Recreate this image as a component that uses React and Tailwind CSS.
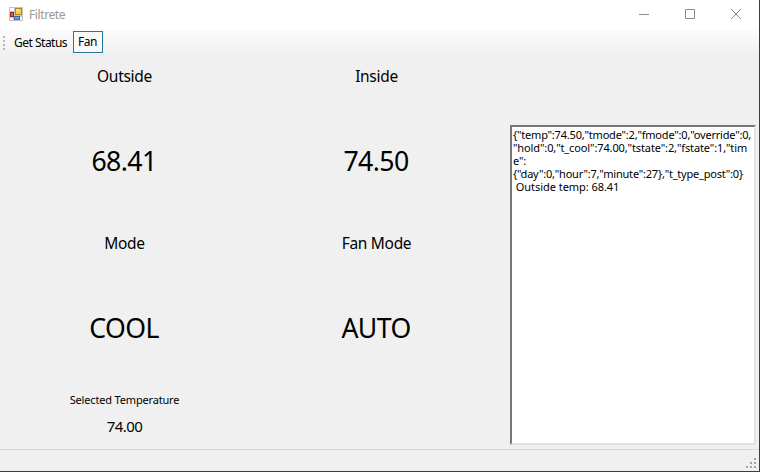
import React from "react";

function AppIcon() {
  return (
    <svg width="14" height="14" viewBox="0 0 14 14" shapeRendering="crispEdges">
      <rect width="14" height="14" fill="#c4c2c0" />
      <path d="M1 1h4v3H1zM1 11h3v2H1zM11 10h2v3h-2z" fill="#fff" />
      <rect x="6" y="1" width="7" height="7" fill="#b88a1e" />
      <rect x="7" y="2" width="5" height="5" fill="#f6cf52" />
      <rect x="7" y="2" width="3" height="2" fill="#fbe389" />
      <rect x="1" y="5" width="4" height="5" fill="#a02a20" />
      <rect x="2" y="6" width="2" height="3" fill="#dc6248" />
      <rect x="5" y="9" width="6" height="4" fill="#3c6cc0" />
      <rect x="6" y="10" width="4" height="2" fill="#6c9ce4" />
    </svg>
  );
}

function TitleBar() {
  return (
    <header className="flex h-[30px] shrink-0 items-center bg-white pb-[2px] pl-[9px]">
      <AppIcon />
      <span className="ml-[6px] pt-px text-[12px] leading-[17px] tracking-[-0.4px] text-[#999]">Filtrete</span>
      <div className="ml-auto flex text-[#8c8c8c]">
        {["M0 5.5h10", "M.5 .5h9v9h-9z", "M0 0l10 10M10 0L0 10"].map((d) => (
          <div key={d} className="flex w-[46px] items-center justify-center">
            <svg width="10" height="10" viewBox="0 0 10 10" fill="none" stroke="currentColor">
              <path d={d} />
            </svg>
          </div>
        ))}
      </div>
    </header>
  );
}

function ToolBar() {
  return (
    <nav className="flex h-[25px] shrink-0 items-center bg-linear-to-b from-[#fcfcfc] to-[#f0f0f0] pl-[3px] text-[12px] text-black">
      <svg width="2" height="14" viewBox="0 0 2 14" fill="#b8b8b8">
        <path d="M0 0h2v2H0zM0 4h2v2H0zM0 8h2v2H0zM0 12h2v2H0z" />
      </svg>
      <button className="ml-[9px] w-[54px] whitespace-nowrap text-left tracking-[-0.5px]">Get Status</button>
      <button className="ml-[5px] mt-[-1px] h-[22px] w-[30px] border border-[#26769b] bg-[#fafafa] pr-px tracking-[-0.5px]">Fan</button>
    </nav>
  );
}

function Reading({ label, value }) {
  return (
    <section className="flex h-[167px] w-[252px] flex-col items-center">
      <h2 className="h-[44px] pt-[10px] pl-px text-[15.5px] leading-[22px] tracking-[-0.3px]">{label}</h2>
      <p className="pt-[43px] text-[26.67px] leading-[38px] tracking-[-0.6px]">{value}</p>
    </section>
  );
}

export default function App() {
  return (
    <div className="flex h-[472px] w-[760px] flex-col overflow-hidden border-r border-b border-[#3c3c3c] bg-[#f0f0f0] font-['Noto_Sans','Open_Sans',sans-serif] text-black">
      <TitleBar />
      <ToolBar />
      <main className="flex h-[394px] shrink-0">
        <div className="flex w-[510px] flex-col">
          <div className="-ml-[2px] flex">
            <Reading label="Outside" value="68.41" />
            <Reading label="Inside" value="74.50" />
          </div>
          <div className="-ml-[2px] flex">
            <Reading label="Mode" value="COOL" />
            <Reading label="Fan Mode" value="AUTO" />
          </div>
          <div className="flex w-[249px] flex-col items-center">
            <span className="mt-[3px] text-[11px] leading-[16px] tracking-[-0.17px]">Selected Temperature</span>
            <span className="mt-[8px] text-[15px] leading-[20px] tracking-[-0.6px]">74.00</span>
          </div>
        </div>
        <div className="h-[391px] w-[246px] pt-[70px]">
          <p className="h-[320px] overflow-hidden border-2 border-t-[#777] border-r-[#e3e3e3] border-b-[#e3e3e3] border-l-[#777] bg-white pt-px pl-px text-[11px] leading-[13px] whitespace-pre">
            <span className="tracking-[-0.2px]">{'{"temp":74.50,"tmode":2,"fmode":0,"override":0,\n'}</span>
            <span className="tracking-[-0.12px]">{'"hold":0,"t_cool":74.00,"tstate":2,"fstate":1,"tim\ne":\n'}</span>
            <span className="tracking-[-0.21px]">{'{"day":0,"hour":7,"minute":27},"t_type_post":0}\n'}</span>
            <span className="tracking-[-0.05px]">{" Outside temp: 68.41"}</span>
          </p>
        </div>
      </main>
      <footer className="flex h-[22px] shrink-0 items-end justify-end border-t border-[#d7d7d7] pr-[3px] pb-[3px]">
        <svg width="10" height="10" viewBox="0 0 10 10" fill="#a3a3a3">
          <path d="M8 0h2v2H8zM4 4h2v2H4zM8 4h2v2H8zM0 8h2v2H0zM4 8h2v2H4zM8 8h2v2H8z" />
        </svg>
      </footer>
    </div>
  );
}
